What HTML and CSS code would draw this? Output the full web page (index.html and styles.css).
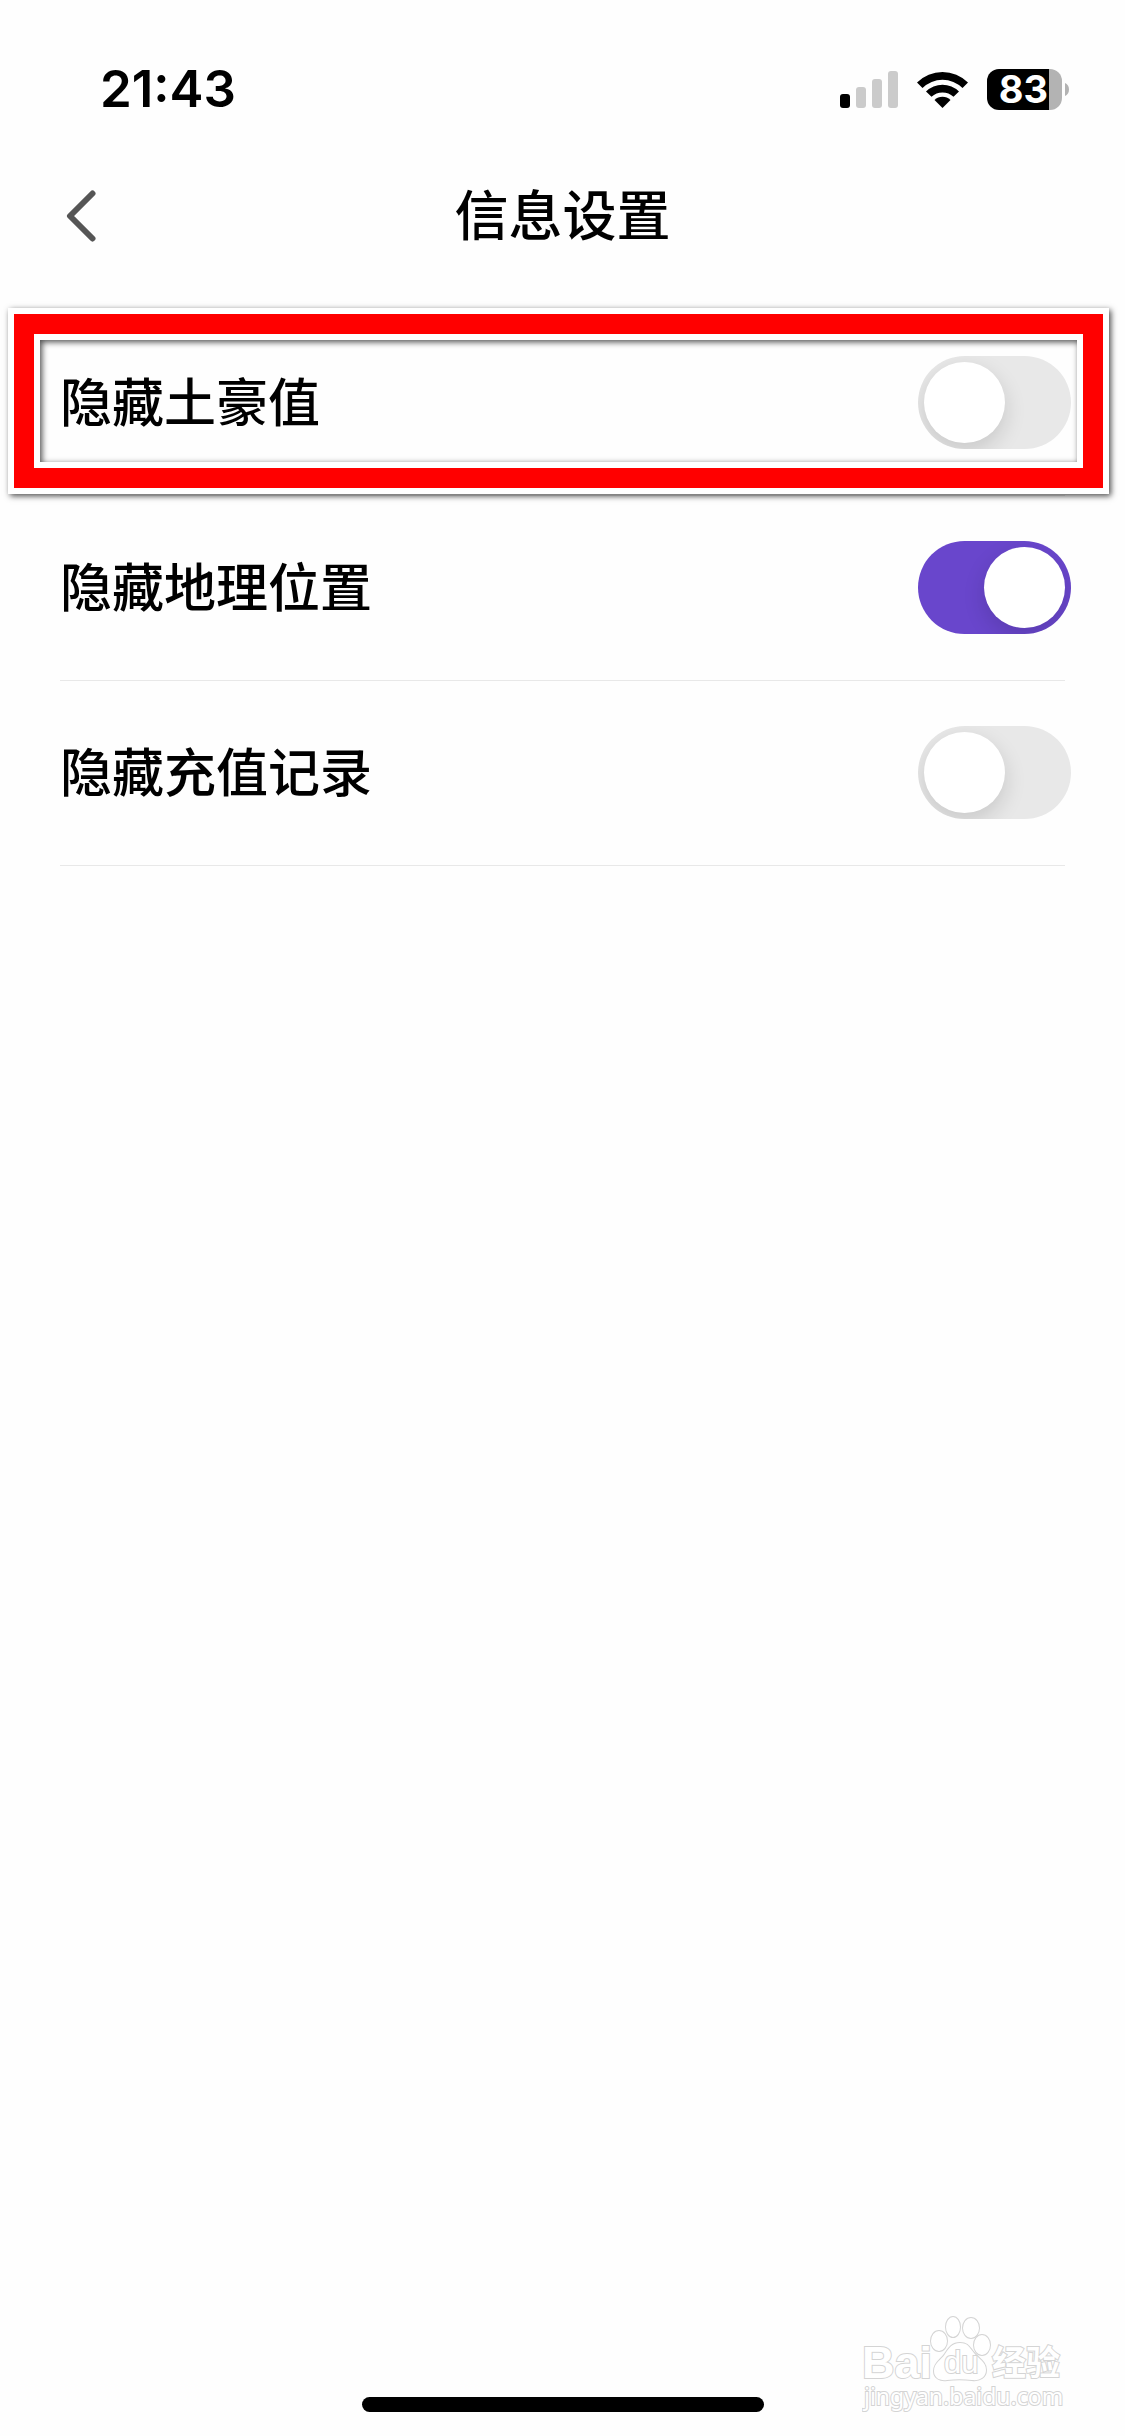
FILE: index.html
```html
<!DOCTYPE html>
<html lang="zh-CN">
<head>
<meta charset="utf-8">
<meta name="viewport" content="width=device-width, initial-scale=1">
<title>信息设置</title>
<link rel="stylesheet" href="styles.css">
</head>
<body>
<div class="screen">
  <div class="status">
    <time class="clock">21:43</time>
    <div class="indicators">
      <svg class="signal" viewBox="0 0 58 37" aria-hidden="true">
        <rect x="0" y="23" width="10" height="14" rx="3"/>
        <g fill="#cbcbcb">
          <rect x="16" y="16" width="10" height="21" rx="3"/>
          <rect x="32" y="8" width="10" height="29" rx="3"/>
          <rect x="48" y="0" width="10" height="37" rx="3"/>
        </g>
      </svg>
      <svg class="wifi" viewBox="0 0 51 37" aria-hidden="true">
        <path d="M0 11.5a36 36 0 0 1 51 0l-5.500 5.500a28.500 28.500 0 0 0-40 0z"/>
        <path d="M9 20.500a23.500 23.500 0 0 1 33 0l-5.500 5.300a16 16 0 0 0-22 0z"/>
        <path d="M17.500 29a11.500 11.500 0 0 1 16 0l-8 8z"/>
      </svg>
      <div class="battery">
        <span class="level">83</span>
        <svg class="nub" viewBox="0 0 4 13" aria-hidden="true"><path d="M0 0c2.500 1 4 3.500 4 6.500s-1.500 5.500-4 6.500z" fill="#b3b3b3"/></svg>
      </div>
    </div>
  </div>

  <header class="header">
    <button class="back" type="button" aria-label="返回">
      <svg viewBox="0 0 30 52" aria-hidden="true"><path d="M26.500 3.500L4 26L26.500 48.500" fill="none" stroke="#555" stroke-width="6" stroke-linecap="round" stroke-linejoin="round"/></svg>
    </button>
    <h1 class="title">信息设置</h1>
  </header>

  <main class="main">
    <ul class="settings">
      <li class="row">
        <label class="label" for="wealth">隐藏土豪值</label>
        <input class="switch" id="wealth" type="checkbox" role="switch">
        <span class="highlight"></span>
      </li>
      <li class="row">
        <label class="label" for="location">隐藏地理位置</label>
        <input class="switch" id="location" type="checkbox" role="switch" checked>
      </li>
      <li class="row">
        <label class="label" for="recharge">隐藏充值记录</label>
        <input class="switch" id="recharge" type="checkbox" role="switch">
      </li>
    </ul>
  </main>

  <svg class="watermark" viewBox="0 0 210 106">
    <g class="ink">
      <text class="wm-brand" x="0" y="67">Bai</text>
      <ellipse cx="77" cy="30" rx="8" ry="10"/>
      <ellipse cx="91" cy="16" rx="7" ry="10"/>
      <ellipse cx="109" cy="17" rx="8" ry="10"/>
      <ellipse cx="120" cy="34" rx="8" ry="10"/>
      <path d="M98 32c-8 0-11 5-15 11s-11 9-11 17c0 7 6 10 13 9 8-1 17-1 25 0 8 1 14-3 14-10 0-8-7-11-12-17s-6-10-14-10z"/>
      <text class="wm-du" x="82" y="62">du</text>
      <text class="wm-cjk" x="130" y="64">经验</text>
      <text class="wm-url" x="2" y="94">jingyan.baidu.com</text>
    </g>
  </svg>
  <div class="home"></div>
</div>
</body>
</html>
```
FILE: styles.css
```css
* {
  box-sizing: border-box;
}

body {
  margin: 0;
  background: #fefefe;
  color: #000;
  font-family: Inter, "Noto Sans CJK SC", sans-serif;
}

.screen {
  position: relative;
  display: flex;
  flex-direction: column;
  min-height: 100vh;
}

.status {
  display: flex;
  align-items: center;
  justify-content: space-between;
  padding: 57px 56px 0 100px;
}

.clock {
  font-size: 51px;
  font-weight: 600;
  line-height: 64px;
}

.indicators {
  display: flex;
  align-items: center;
  gap: 19px;
}

.signal {
  width: 58px;
  height: 37px;
}

.wifi {
  width: 51px;
  height: 37px;
}

.battery {
  display: flex;
  align-items: center;
  gap: 3px;
}

.level {
  width: 75px;
  padding-right: 2px;
  border-radius: 12px;
  background: linear-gradient(to right, #000 62px, #b3b3b3 62px);
  color: #fff;
  font-size: 38px;
  font-weight: 700;
  line-height: 41px;
  text-align: center;
}

.nub {
  width: 4px;
  height: 13px;
}

.header {
  display: grid;
  grid-template-columns: 1fr auto 1fr;
  align-items: center;
  padding: 54px 66px;
}

.back {
  justify-self: start;
  display: flex;
  padding: 0;
  border: 0;
  background: none;
}

.back svg {
  width: 30px;
  height: 52px;
}

.title {
  margin: 0;
  padding-top: 2px;
  font-size: 54px;
  font-weight: 500;
  line-height: 80px;
}

.main {
  flex: 1;
}

.settings {
  margin: 0;
  padding: 0 60px;
  list-style: none;
}

.row {
  position: relative;
  display: flex;
  align-items: center;
  justify-content: space-between;
  padding: 45px 0 46px;
  border-bottom: 1px solid #e8e8e8;
}

.label {
  padding-top: 3px;
  font-size: 52px;
  font-weight: 500;
  line-height: 76px;
}

.switch {
  appearance: none;
  overflow: clip;
  width: 153px;
  height: 93px;
  margin: 0 -6px 0 0;
  padding: 6px;
  border-radius: 47px;
  background: #e8e8e8;
}

.switch::before {
  content: "";
  display: block;
  width: 81px;
  height: 81px;
  border-radius: 50%;
  background: #fff;
  box-shadow: 0 8px 22px rgba(0, 0, 0, 0.14);
}

.switch:checked {
  background: #6946cc;
}

.switch:checked::before {
  margin-left: auto;
}

/* Callout frame around the option being explained */
.highlight {
  position: absolute;
  inset: 3px -38px 7px -46px;
  border: 20px solid #f00;
  box-shadow:
    0 0 0 6px #fff,
    2px 2px 6px 6px rgba(0, 0, 0, 0.7),
    inset 0 0 0 6px #fff,
    inset 2px 2px 6px 6px rgba(0, 0, 0, 0.7);
  pointer-events: none;
}

.watermark {
  position: absolute;
  right: 53px;
  bottom: 19px;
  width: 210px;
  height: 106px;
}

.ink {
  fill: #fff;
  stroke: #d4d4d4;
  stroke-width: 2px;
  paint-order: stroke;
}

.wm-brand {
  font: 700 45px "Liberation Sans", sans-serif;
}

.wm-du {
  font: 400 31px "Liberation Sans", sans-serif;
}

.wm-cjk {
  font: 700 34px "Noto Sans CJK SC", sans-serif;
}

.wm-url {
  font: 400 23px "Noto Sans", sans-serif;
}

.home {
  align-self: center;
  width: 402px;
  height: 15px;
  margin-bottom: 24px;
  border-radius: 8px;
  background: #000;
}
```
